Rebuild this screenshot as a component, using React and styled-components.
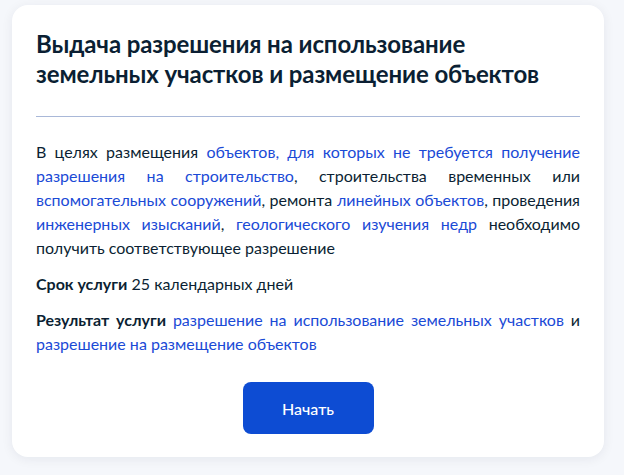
import React from "react";
import styled, { createGlobalStyle } from "styled-components";

const GlobalStyle = createGlobalStyle`
  html, body {
    margin: 0;
    padding: 0;
    background: #f5f7fb;
  }
  body {
    font-family: Lato, "Noto Sans", sans-serif;
    color: #0b1f33;
  }
`;

const Page = styled.div`
  padding: 5px 20px 17px 12px;
`;

const Card = styled.section`
  width: 592px;
  box-sizing: border-box;
  background: #fff;
  border-radius: 16px;
  box-shadow: 0 2px 12px rgba(11, 31, 51, 0.07);
  padding: 24px 24px 23px;
  display: flex;
  flex-direction: column;
`;

const Title = styled.h1`
  margin: 0;
  font-size: 24px;
  line-height: 30px;
  font-weight: 700;
  letter-spacing: -0.1px;
`;

const Divider = styled.hr`
  border: none;
  border-top: 1px solid #a9b8d8;
  margin: 27px 0 23px;
`;

const Text = styled.p`
  margin: 0 0 12px;
  font-size: 16px;
  line-height: 24px;
  text-align: ${(p) => (p.$justify ? "justify" : "left")};
`;

const Link = styled.a`
  color: #1a4ad6;
  text-decoration: none;
`;

const Label = styled.b`
  font-weight: 700;
`;

const Actions = styled.div`
  display: flex;
  justify-content: center;
  margin-top: 14px;
`;

const Button = styled.button`
  width: 131px;
  height: 52px;
  border: none;
  border-radius: 8px;
  background: #0d4cd3;
  color: #fff;
  font-family: Lato, "Noto Sans", sans-serif;
  font-size: 16px;
  font-weight: 500;
  cursor: pointer;
`;

export default function App() {
  return (
    <Page>
      <GlobalStyle />
      <Card>
        <Title>
          Выдача разрешения на использование
          <br />
          земельных участков и размещение объектов
        </Title>
        <Divider />
        <Text $justify>
          В целях размещения{" "}
          <Link href="#">объектов, для которых не требуется получение разрешения на строительство</Link>,
          строительства временных или{" "}
          <Link href="#">вспомогательных сооружений</Link>, ремонта{" "}
          <Link href="#">линейных объектов</Link>, проведения{" "}
          <Link href="#">инженерных изысканий</Link>,{" "}
          <Link href="#">геологического изучения недр</Link> необходимо получить
          соответствующее разрешение
        </Text>
        <Text>
          <Label>Срок услуги</Label> 25 календарных дней
        </Text>
        <Text $justify>
          <Label>Результат услуги</Label>{" "}
          <Link href="#">разрешение на использование земельных участков</Link> и{" "}
          <Link href="#">разрешение на размещение объектов</Link>
        </Text>
        <Actions>
          <Button>Начать</Button>
        </Actions>
      </Card>
    </Page>
  );
}
